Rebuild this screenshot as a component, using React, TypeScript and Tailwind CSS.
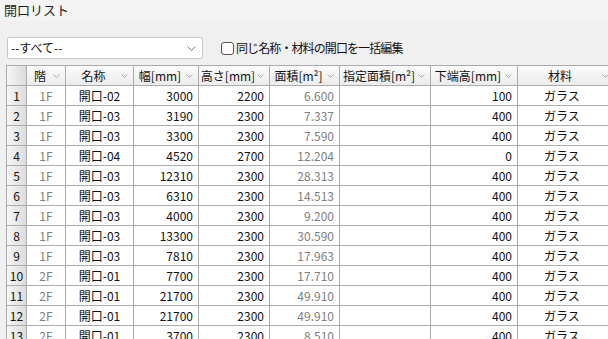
import React from "react";

/* ============================================================
   Data
============================================================ */

interface OpeningRow {
  floor: string;
  name: string;
  width: number;
  height: number;
  area: string;
  bottom: number;
}

const rows: OpeningRow[] = [
  { floor: "1F", name: "開口-02", width: 3000, height: 2200, area: "6.600", bottom: 100 },
  { floor: "1F", name: "開口-03", width: 3190, height: 2300, area: "7.337", bottom: 400 },
  { floor: "1F", name: "開口-03", width: 3300, height: 2300, area: "7.590", bottom: 400 },
  { floor: "1F", name: "開口-04", width: 4520, height: 2700, area: "12.204", bottom: 0 },
  { floor: "1F", name: "開口-03", width: 12310, height: 2300, area: "28.313", bottom: 400 },
  { floor: "1F", name: "開口-03", width: 6310, height: 2300, area: "14.513", bottom: 400 },
  { floor: "1F", name: "開口-03", width: 4000, height: 2300, area: "9.200", bottom: 400 },
  { floor: "1F", name: "開口-03", width: 13300, height: 2300, area: "30.590", bottom: 400 },
  { floor: "1F", name: "開口-03", width: 7810, height: 2300, area: "17.963", bottom: 400 },
  { floor: "2F", name: "開口-01", width: 7700, height: 2300, area: "17.710", bottom: 400 },
  { floor: "2F", name: "開口-01", width: 21700, height: 2300, area: "49.910", bottom: 400 },
  { floor: "2F", name: "開口-01", width: 21700, height: 2300, area: "49.910", bottom: 400 },
  { floor: "2F", name: "開口-01", width: 3700, height: 2300, area: "8.510", bottom: 400 },
];

const headers = [
  "階",
  "名称",
  "幅[mm]",
  "高さ[mm]",
  "面積[m²]",
  "指定面積[m²]",
  "下端高[mm]",
  "材料",
];

/* ============================================================
   Small pieces
============================================================ */

function FilterArrow() {
  return (
    <svg width="7" height="4" viewBox="0 0 7 4" className="shrink-0">
      <polyline
        points="0.5,0.5 3.5,3.5 6.5,0.5"
        fill="none"
        stroke="#a8a8a8"
        strokeWidth="1"
      />
    </svg>
  );
}

function HeaderCell({ label }: { label: string }) {
  return (
    <div className="flex items-center bg-gradient-to-b from-[#fbfbfb] to-[#ececec] pr-[5px] text-[#111]">
      <span className="flex-1 text-center whitespace-nowrap">{label}</span>
      <FilterArrow />
    </div>
  );
}

function RowHead({ children }: { children?: React.ReactNode }) {
  return (
    <div className="flex items-center justify-center bg-gradient-to-r from-[#f6f6f6] to-[#dcdcdc] text-[#111]">
      {children}
    </div>
  );
}

/* ============================================================
   Component
============================================================ */

export default function App() {
  return (
    <div
      className="h-[339px] w-[608px] overflow-hidden bg-[#f0f0f0] text-[12px]"
      style={{ fontFamily: '"Noto Sans CJK JP", "Noto Sans", sans-serif' }}
    >
      {/* title */}
      <div className="flex h-[21px] items-center bg-[#f4f4f4] px-[4px] pb-[1px] text-[13px] text-[#222]">
        開口リスト
      </div>

      {/* toolbar */}
      <div className="flex items-center gap-[18px] pt-[16px] pl-[7px]">
        <div className="flex h-[22px] w-[196px] items-center justify-between rounded-[2px] border border-[#c8c8c8] bg-white pr-[6px] pl-[3px] text-[#111]">
          <span>--すべて--</span>
          <svg width="9" height="5" viewBox="0 0 9 5">
            <polyline
              points="0.5,0.5 4.5,4.5 8.5,0.5"
              fill="none"
              stroke="#777"
              strokeWidth="1"
            />
          </svg>
        </div>

        <label className="flex items-center gap-[2px] tracking-[-0.9px] text-[#111]">
          <span className="h-[13px] w-[13px] rounded-[3px] border border-[#555] bg-white" />
          同じ名称・材料の開口を一括編集
        </label>
      </div>

      {/* grid */}
      <div className="mt-[6px] ml-[6px] w-max border-t border-l border-[#acacac]">
        <div className="grid grid-cols-[19px_38px_67px_64px_70px_69px_90px_86px_96px] auto-rows-[19px] gap-px bg-[#acacac] leading-none">
          <RowHead />
          {headers.map((h) => (
            <HeaderCell key={h} label={h} />
          ))}

          {rows.map((r, i) => (
            <React.Fragment key={i}>
              <RowHead>{i + 1}</RowHead>
              <div className="flex items-center justify-center bg-white text-[#808080]">
                {r.floor}
              </div>
              <div className="flex items-center justify-center bg-white text-[#111]">
                {r.name}
              </div>
              <div className="flex items-center justify-end bg-white pr-[5px] text-[#111]">
                {r.width}
              </div>
              <div className="flex items-center justify-end bg-white pr-[5px] text-[#111]">
                {r.height}
              </div>
              <div className="flex items-center justify-end bg-white pr-[5px] text-[#808080]">
                {r.area}
              </div>
              <div className="bg-white" />
              <div className="flex items-center justify-end bg-white pr-[5px] text-[#111]">
                {r.bottom}
              </div>
              <div className="flex items-center justify-center bg-white pr-[8px] text-[#111]">
                ガラス
              </div>
            </React.Fragment>
          ))}
        </div>
      </div>
    </div>
  );
}
